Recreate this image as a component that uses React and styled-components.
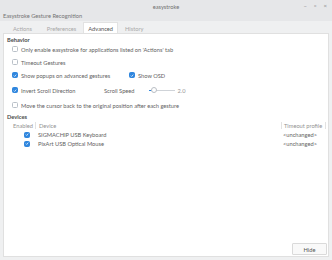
import styled, { createGlobalStyle } from "styled-components";

const GlobalStyle = createGlobalStyle`
  html, body { margin: 0; padding: 0; }
  body {
    background: #e7e8ea;
    font-family: Lato, "Noto Sans", sans-serif;
    font-size: 5.7px;
    color: #626262;
  }
`;

const Window = styled.div`
  width: 332px;
  height: 260px;
  display: flex;
  flex-direction: column;
  background: #eff0f1;
`;

const TitleBar = styled.div`
  height: 21px;
  background: #e6e7e9;
  display: grid;
  grid-template-rows: 11px 10px;
`;

const TitleLine = styled.div`
  position: relative;
  display: flex;
  align-items: center;
  justify-content: center;
  color: #707070;
  padding-top: 1px;
`;

const Controls = styled.div`
  position: absolute;
  right: 5px;
  top: 3px;
  display: flex;
  gap: 7px;
  color: #8a8a8a;
  font-size: 6px;
  line-height: 6px;
`;

const Subtitle = styled.div`
  padding-left: 3px;
  color: #747474;
  line-height: 9px;
`;

const TabStrip = styled.div`
  height: 11px;
  margin-top: 1px;
  display: flex;
  padding-left: 5px;
`;

const Tab = styled.div`
  display: flex;
  align-items: center;
  justify-content: center;
  padding: 0 ${(p) => p.$pad}px;
  color: ${(p) => (p.$active ? "#555" : "#a8a8a8")};
  background: ${(p) => (p.$active ? "#fff" : "transparent")};
  border: 1px solid ${(p) => (p.$active ? "#e2e2e2" : "transparent")};
  border-bottom: none;
`;

const Panel = styled.div`
  flex: 1;
  margin: 0 3px 3px;
  background: #fff;
  border: 1px solid #e0e0e0;
  display: flex;
  flex-direction: column;
  padding: 1px 0 1px 0;
`;

const SectionTitle = styled.div`
  height: 9px;
  display: flex;
  align-items: center;
  padding-left: 3px;
  font-weight: 700;
  color: #4a4a4a;
  margin-top: ${(p) => p.$mt || 0}px;
`;

const Row = styled.div`
  height: 10px;
  display: flex;
  align-items: center;
  padding-left: 8px;
  margin-top: ${(p) => p.$mt || 0}px;
`;

const Cell = styled.div`
  display: flex;
  align-items: center;
  width: ${(p) => (p.$w ? `${p.$w}px` : "auto")};
`;

const Box = styled.span`
  width: 6px;
  height: 6px;
  box-sizing: border-box;
  border-radius: 1.5px;
  border: 1px solid ${(p) => (p.$on ? "#2f86de" : "#b9c0c8")};
  background: ${(p) => (p.$on ? "#2f86de" : "#fff")};
  display: inline-flex;
  align-items: center;
  justify-content: center;
  flex-shrink: 0;
`;

const Label = styled.span`
  margin-left: 3px;
  white-space: nowrap;
`;

const Muted = styled.span`
  color: #959595;
  white-space: nowrap;
`;

const Slider = styled.div`
  position: relative;
  width: 26px;
  height: 6px;
  margin: 0 3px 0 14px;
  display: flex;
  align-items: center;
`;

const Track = styled.div`
  width: 100%;
  height: 1px;
  background: #cfd3d8;
`;

const Fill = styled.div`
  position: absolute;
  left: 0;
  top: 2.5px;
  height: 1px;
  width: 4px;
  background: #2f86de;
`;

const Knob = styled.div`
  position: absolute;
  left: 2px;
  top: 0;
  width: 6px;
  height: 6px;
  box-sizing: border-box;
  border-radius: 50%;
  background: #fff;
  border: 1px solid #b9bec4;
`;

const Table = styled.div`
  display: grid;
  grid-template-columns: 31px 246px 45px;
  grid-auto-rows: 9px;
  align-items: center;
`;

const Head = styled.div`
  height: 7px;
  display: flex;
  align-items: center;
  justify-content: ${(p) => (p.$right ? "flex-end" : "flex-start")};
  padding: 0 2px 0 ${(p) => p.$pl || 0}px;
  border-left: ${(p) => (p.$sep ? "1px solid #e2e2e2" : "none")};
  border-right: ${(p) => (p.$end ? "1px solid #e2e2e2" : "none")};
  color: #939393;
  white-space: nowrap;
  overflow: hidden;
`;

const TCell = styled.div`
  display: flex;
  align-items: center;
  justify-content: ${(p) => (p.$center ? "flex-end" : "flex-start")};
  padding-left: ${(p) => p.$pl || 0}px;
  padding-right: ${(p) => p.$pr || 0}px;
  white-space: nowrap;
`;

const Footer = styled.div`
  margin-top: auto;
  display: flex;
  justify-content: flex-end;
  padding-right: 1px;
`;

const Button = styled.button`
  width: 35px;
  height: 12px;
  padding: 0;
  font: inherit;
  color: #555;
  background: #f9f9f9;
  border: 1px solid #dadada;
  border-radius: 1px;
`;

const Check = ({ on }) => (
  <Box $on={on}>
    {on && (
      <svg width="5" height="5" viewBox="0 0 10 10">
        <path d="M2 5.2 L4.2 7.4 L8.2 2.8" fill="none" stroke="#fff" strokeWidth="1.8" />
      </svg>
    )}
  </Box>
);

const devices = ["SIGMACHIP USB Keyboard", "PixArt USB Optical Mouse"];

export default function App() {
  return (
    <Window>
      <GlobalStyle />
      <TitleBar>
        <TitleLine>
          easystroke
          <Controls>
            <span>–</span>
            <span>▫</span>
            <span>×</span>
          </Controls>
        </TitleLine>
        <Subtitle>Easystroke Gesture Recognition</Subtitle>
      </TitleBar>
      <TabStrip>
        <Tab $pad={7}>Actions</Tab>
        <Tab $pad={6}>Preferences</Tab>
        <Tab $pad={4} $active>Advanced</Tab>
        <Tab $pad={6}>History</Tab>
      </TabStrip>
      <Panel>
        <SectionTitle>Behavior</SectionTitle>
        <Row>
          <Check />
          <Label>Only enable easystroke for applications listed on 'Actions' tab</Label>
        </Row>
        <Row $mt={3}>
          <Check />
          <Label>Timeout Gestures</Label>
        </Row>
        <Row $mt={3}>
          <Cell $w={117}>
            <Check on />
            <Label>Show popups on advanced gestures</Label>
          </Cell>
          <Cell>
            <Check on />
            <Label>Show OSD</Label>
          </Cell>
        </Row>
        <Row $mt={5}>
          <Cell $w={92}>
            <Check on />
            <Label>Invert Scroll Direction</Label>
          </Cell>
          <Cell>
            <span>Scroll Speed</span>
            <Slider>
              <Track />
              <Fill />
              <Knob />
            </Slider>
            <Muted>2.0</Muted>
          </Cell>
        </Row>
        <Row $mt={5}>
          <Check />
          <Label>Move the cursor back to the original position after each gesture</Label>
        </Row>
        <SectionTitle $mt={2}>Devices</SectionTitle>
        <Table>
          <Head $right>Enabled</Head>
          <Head $sep $pl={3}>Device</Head>
          <Head $sep $end $pl={2}>Timeout profile</Head>
          {devices.map((d) => (
            <>
              <TCell key={d + "c"} $center $pr={5}>
                <Check on />
              </TCell>
              <TCell key={d + "n"} $pl={3}>{d}</TCell>
              <TCell key={d + "t"} $pl={2}>&lt;unchanged&gt;</TCell>
            </>
          ))}
        </Table>
        <Footer>
          <Button>Hide</Button>
        </Footer>
      </Panel>
    </Window>
  );
}
